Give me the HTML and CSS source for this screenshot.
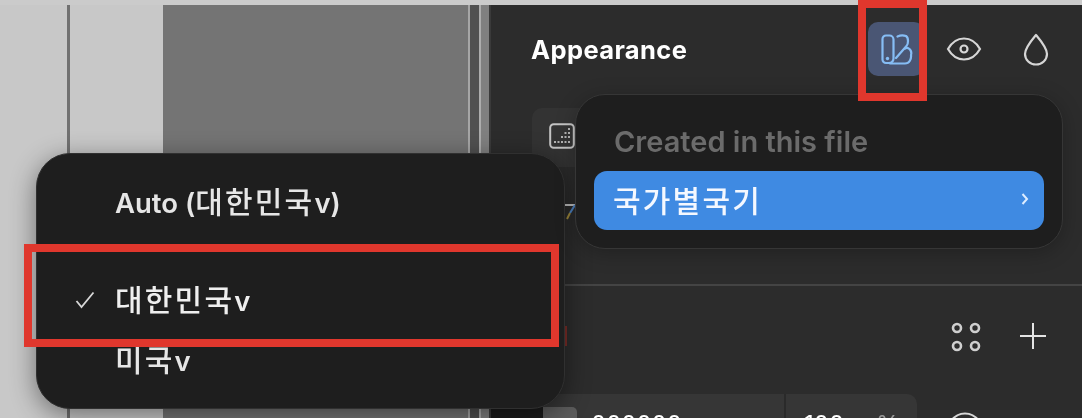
FILE: index.html
```html
<!DOCTYPE html>
<html lang="en">
<head>
    <meta charset="UTF-8">
    <meta name="viewport" content="width=device-width, initial-scale=1.0">
    <title>Appearance variable modes</title>
    <link rel="stylesheet" href="styles.css">
</head>
<body>
    <div class="top-strip"></div>
    <div class="workspace">
        <div class="canvas">
            <div class="canvas-light"><div class="canvas-line"></div></div>
            <div class="canvas-frame"></div>
            <div class="canvas-edge"></div>
        </div>

        <aside class="panel">
            <div class="panel-head">
                <h2>Appearance</h2>
                <button class="tool-btn active">
                    <svg width="32" height="31" viewBox="0 0 32 31" fill="none" stroke="#86bdf5" stroke-width="2.200" stroke-linejoin="round" stroke-linecap="round">
                        <path d="M1.500 5a3.500 3.500 0 0 1 3.500-3.500h3.500a4 4 0 0 1 4 4v19a4.500 4.500 0 0 1-4.500 4.500h-3a3.500 3.500 0 0 1-3.500-3.500z"/>
                        <circle cx="6.500" cy="24.500" r="1.700" fill="#86bdf5" stroke="none"/>
                        <path d="M16.500 2.500c3-1.500 6-1.500 8.500-.5 1.500 1 2 3 2 5 0 2.500-.5 4-1.500 5L15 24"/>
                        <path d="M24 14.500c2-1.500 3.500-.5 5 1 1.500 2 1.500 4 1 5.500.5 4-1.500 8.500-6 8.500H9"/>
                    </svg>
                </button>
                <button class="tool-btn eye-btn">
                    <svg width="36" height="26" viewBox="0 0 36 26" fill="none" stroke="#d6d6d6" stroke-width="2.200">
                        <path d="M2 13C6 6 11 2.500 18 2.500S30 6 34 13c-4 7-9 10.500-16 10.500S6 20 2 13z"/>
                        <circle cx="18" cy="13" r="3.500"/>
                    </svg>
                </button>
                <button class="tool-btn drop-btn">
                    <svg width="26" height="33" viewBox="0 0 26 33" fill="none" stroke="#d6d6d6" stroke-width="2.200" stroke-linejoin="round">
                        <path d="M13 2c5 6 11 13 11 19a11 10.500 0 0 1-22 0C2 15 8 8 13 2z"/>
                    </svg>
                </button>
            </div>

            <div class="field-wide">
                <svg width="26" height="26" viewBox="0 0 26 26" fill="none">
                    <rect x="1.200" y="1.200" width="23.600" height="23.600" rx="3.500" stroke="#c4c4c4" stroke-width="2"/>
                    <g fill="#b4b4b4">
                        <rect x="19" y="5" width="2" height="2"/>
                        <rect x="15.500" y="9" width="2" height="2"/><rect x="19" y="9" width="2" height="2"/>
                        <rect x="12" y="13" width="2" height="2"/><rect x="15.500" y="13" width="2" height="2"/><rect x="19" y="13" width="2" height="2"/>
                        <rect x="5" y="18" width="2" height="2"/><rect x="8.500" y="18" width="2" height="2"/><rect x="12" y="18" width="2" height="2"/><rect x="15.500" y="18" width="2" height="2"/><rect x="19" y="18" width="2" height="2"/>
                    </g>
                </svg>
            </div>

            <svg class="corner-mark" width="11" height="18" viewBox="0 0 11 18" fill="none" stroke-width="2">
                <path d="M0 2h10" stroke="#c8c8c8"/>
                <path d="M10 2L5 10" stroke="#4f86c9"/>
                <path d="M5 10l-3 6" stroke="#a8903f"/>
            </svg>

            <section class="color-section">
                <div class="color-head">
                    <span class="tick"></span>
                    <div class="color-tools">
                        <svg width="30" height="30" viewBox="0 0 30 30" fill="none" stroke="#cfcfcf" stroke-width="2.600">
                            <circle cx="6" cy="6" r="4"/><circle cx="24" cy="6" r="4"/>
                            <circle cx="6" cy="24" r="4"/><circle cx="24" cy="24" r="4"/>
                        </svg>
                        <svg width="28" height="28" viewBox="0 0 28 28" stroke="#e4e4e4" stroke-width="2">
                            <path d="M14 1v26M1 14h26"/>
                        </svg>
                    </div>
                </div>
                <div class="color-row">
                    <div class="color-field">
                        <span class="swatch-dark"></span>
                        <span class="swatch"></span>
                        <span class="hex">000000</span>
                        <span class="opacity"><span>100</span><span class="percent">%</span></span>
                    </div>
                    <svg class="row-eye" width="36" height="26" viewBox="0 0 36 26" fill="none" stroke="#d6d6d6" stroke-width="2.200">
                        <path d="M2 13C6 6 11 2.500 18 2.500S30 6 34 13c-4 7-9 10.500-16 10.500S6 20 2 13z"/>
                    </svg>
                </div>
            </section>
        </aside>
    </div>

    <div class="mode-menu">
        <div class="mode-item"><span class="soft">Auto (<span class="ko">대한민국</span>v)</span></div>
        <div class="mode-item selected">
            <svg class="check" width="20" height="18" viewBox="0 0 20 18" fill="none" stroke="#d8d8d8" stroke-width="1.800">
                <path d="M1.500 10l5 6L18.500 1.500"/>
            </svg>
            <span class="soft"><span class="ko">대한민국</span>v</span>
        </div>
        <div class="mode-item"><span class="soft"><span class="ko">미국</span>v</span></div>
    </div>

    <div class="library-menu">
        <div class="library-title soft">Created in this file</div>
        <div class="library-item">
            <span class="ko soft">국가별국기</span>
            <svg width="8" height="14" viewBox="0 0 8 14" fill="none" stroke="#dcecff" stroke-width="2">
                <path d="M1.500 2l4.500 5-4.500 5"/>
            </svg>
        </div>
    </div>

    <div class="mark mark-button"></div>
    <div class="mark mark-mode"></div>
</body>
</html>
```

FILE: styles.css
```css
* {
    margin: 0;
    padding: 0;
    box-sizing: border-box;
}

body {
    width: 1082px;
    height: 418px;
    overflow: hidden;
    position: relative;
    background: #c8c8c8;
    font-family: Inter, "Noto Sans CJK KR", sans-serif;
}

/* the source shot is an upscaled capture, everything is a bit soft */
.soft,
h2,
svg,
.hex,
.opacity {
    filter: blur(0.5px);
}

.top-strip {
    height: 5px;
    background: #cbcbcb;
}

.workspace {
    display: flex;
    height: 413px;
}

.canvas {
    width: 489px;
    display: flex;
}

.canvas-light {
    width: 163px;
    padding-left: 67px;
    background: #c8c8c8;
}

.canvas-line {
    width: 3px;
    height: 100%;
    background: #717171;
}

.canvas-frame {
    width: 307px;
    background: #747474;
    border-right: 2px solid #a6a6a6;
}

.canvas-edge {
    flex: 1;
    background: linear-gradient(to right, #505050 0 9px, #adadad 9px 11px, #808080 11px);
}

.panel {
    flex: 1;
    background: #2c2c2c;
    border-left: 2px solid #3a3a3a;
    overflow: hidden;
}

.panel-head {
    display: flex;
    align-items: center;
    height: 54px;
    margin-top: 17px;
    padding-left: 40px;
}

.panel-head h2 {
    width: 337px;
    color: #fff;
    font-size: 25.500px;
    font-weight: 700;
    letter-spacing: 0.400px;
}

.tool-btn {
    display: flex;
    align-items: center;
    justify-content: center;
    height: 54px;
    border: none;
    border-radius: 10px;
    background: none;
}

.active {
    width: 56px;
    background: #4a5674;
    padding-left: 1px;
}

.eye-btn {
    width: 38px;
    margin-left: 21px;
}

.drop-btn {
    width: 28px;
    margin-left: 39px;
}

.field-wide {
    width: 510px;
    height: 59px;
    margin: 32px 0 0 41px;
    padding: 15px 0 0 17px;
    background: #333;
    border-radius: 10px;
}

.corner-mark {
    display: block;
    margin: 36px 0 0 74px;
}

.color-section {
    margin-top: 63px;
    border-top: 2px solid #444;
}

.color-head {
    display: flex;
    justify-content: space-between;
    height: 108px;
    padding: 36px 35px 0 74px;
}

.tick {
    width: 2px;
    height: 20px;
    margin-top: 4px;
    background: #7a2c27;
}

.color-tools {
    display: flex;
    gap: 38px;
}

.color-row {
    display: flex;
    gap: 30px;
}

.color-field {
    display: flex;
    width: 426px;
    height: 50px;
    padding-top: 13px;
    background: #363636;
    border-radius: 10px;
}

.swatch-dark {
    width: 52px;
    height: 40px;
    background: #1b1b1b;
}

.swatch {
    width: 34px;
    height: 40px;
    background: #5c5c5c;
    border-radius: 0 5px 0 0;
}

.hex {
    width: 191px;
    margin: 3px 0 0 14px;
    padding-right: 0;
    color: #fff;
    font-size: 24px;
}

.opacity {
    display: flex;
    flex: 1;
    gap: 32px;
    margin-top: -13px;
    margin-left: 2px;
    padding: 16px 0 0 18px;
    border-left: 2px solid #2a2a2a;
    color: #fff;
    font-size: 24px;
}

.percent {
    color: #999;
}

.row-eye {
    margin-top: 17px;
}

.mode-menu {
    position: absolute;
    left: 36px;
    top: 153px;
    width: 529px;
    height: 256px;
    padding: 18px 0 0 78px;
    background: #1e1e1e;
    border: 1.500px solid #303030;
    border-radius: 34px;
    box-shadow: 0 6px 26px rgba(0, 0, 0, 0.45);
}

.mode-item {
    position: relative;
    display: flex;
    align-items: center;
    height: 60px;
    padding-bottom: 5px;
    color: #e6e6e6;
    font-size: 27.500px;
    font-weight: 600;
}

.selected {
    margin-top: 38px;
    color: #efefef;
}

.check {
    position: absolute;
    left: -40px;
    top: 21px;
}

.ko {
    font-size: 30px;
    font-weight: 500;
    letter-spacing: 2.200px;
}

.library-menu {
    position: absolute;
    left: 575px;
    top: 94px;
    width: 488px;
    height: 155px;
    padding: 0 18px;
    background: #1e1e1e;
    border: 1.500px solid #363636;
    border-radius: 30px;
    box-shadow: 0 4px 20px rgba(0, 0, 0, 0.25);
}

.library-title {
    height: 76px;
    padding: 28px 0 0 20px;
    color: #6b6b6b;
    font-size: 29px;
    font-weight: 600;
    line-height: 38px;
}

.library-item {
    display: flex;
    align-items: center;
    justify-content: space-between;
    height: 59px;
    padding: 0 15px 3px 19px;
    background: #3f8ae2;
    border-radius: 13px;
    color: #f4f8ff;
}

.mark {
    position: absolute;
    border: 8px solid #e0372d;
}

.mark-button {
    left: 858px;
    top: 0;
    width: 69px;
    height: 101px;
}

.mark-mode {
    left: 24px;
    top: 244px;
    width: 535px;
    height: 103px;
}
```
